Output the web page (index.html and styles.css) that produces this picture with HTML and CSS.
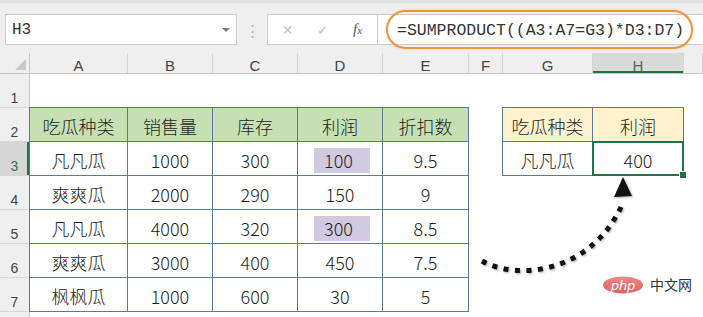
FILE: index.html
```html
<!DOCTYPE html>
<html lang="zh">
<head>
    <meta charset="UTF-8">
    <title>SUMPRODUCT 条件求和</title>
    <link rel="stylesheet" href="styles.css">
</head>
<body>
    <div class="window">
        <!-- name box + formula bar -->
        <div class="topbar">
            <div class="namebox">
                <span class="ref">H3</span>
                <span class="caret"></span>
            </div>
            <div class="grip">⋮</div>
            <div class="fxbox">
                <span class="btn-x">✕</span>
                <span class="btn-ok">✓</span>
                <span class="fx">f<small>x</small></span>
            </div>
            <div class="formula">
                <span class="callout">=SUMPRODUCT((A3:A7=G3)*D3:D7)</span>
            </div>
        </div>

        <!-- column letters -->
        <div class="colheads">
            <div class="corner"><span class="tri"></span></div>
            <div class="col">A</div>
            <div class="col">B</div>
            <div class="col">C</div>
            <div class="col">D</div>
            <div class="col">E</div>
            <div class="col">F</div>
            <div class="col">G</div>
            <div class="col active">H</div>
            <div class="col"></div>
        </div>

        <div class="sheet">
            <div class="rowheads">
                <div class="rh">1</div>
                <div class="rh">2</div>
                <div class="rh active">3</div>
                <div class="rh">4</div>
                <div class="rh">5</div>
                <div class="rh">6</div>
                <div class="rh">7</div>
                <div class="rh"></div>
            </div>

            <div class="cells">
                <div class="tbl sales">
                    <div class="cell hd">吃瓜种类</div>
                    <div class="cell hd">销售量</div>
                    <div class="cell hd">库存</div>
                    <div class="cell hd">利润</div>
                    <div class="cell hd">折扣数</div>

                    <div class="cell">凡凡瓜</div>
                    <div class="cell">1000</div>
                    <div class="cell">300</div>
                    <div class="cell mark"><span class="hl">100</span></div>
                    <div class="cell">9.5</div>

                    <div class="cell">爽爽瓜</div>
                    <div class="cell">2000</div>
                    <div class="cell">290</div>
                    <div class="cell">150</div>
                    <div class="cell">9</div>

                    <div class="cell">凡凡瓜</div>
                    <div class="cell">4000</div>
                    <div class="cell">320</div>
                    <div class="cell mark"><span class="hl">300</span></div>
                    <div class="cell">8.5</div>

                    <div class="cell">爽爽瓜</div>
                    <div class="cell">3000</div>
                    <div class="cell">400</div>
                    <div class="cell">450</div>
                    <div class="cell">7.5</div>

                    <div class="cell">枫枫瓜</div>
                    <div class="cell">1000</div>
                    <div class="cell">600</div>
                    <div class="cell">30</div>
                    <div class="cell">5</div>
                </div>

                <div class="tbl lookup">
                    <div class="cell hd">吃瓜种类</div>
                    <div class="cell hd">利润</div>
                    <div class="cell">凡凡瓜</div>
                    <div class="cell sel">400</div>
                </div>
            </div>
        </div>

        <!-- dotted arrow + watermark drawn over the sheet -->
        <svg class="overlay" width="703" height="317" viewBox="0 0 703 317">
            <path class="dots" d="M482 261 C515 280 590 275 622 205"/>
            <polygon class="head" points="623,177 614,197 632,196"/>
            <defs>
                <linearGradient id="php" x1="0" y1="0" x2="0" y2="1">
                    <stop offset="0" stop-color="#ee8a88"/>
                    <stop offset="1" stop-color="#dd5f5f"/>
                </linearGradient>
            </defs>
            <ellipse cx="623" cy="285" rx="20" ry="8.5" fill="url(#php)"/>
            <text class="php" x="623" y="289.5">php</text>
            <text class="cn" x="650" y="290">中文网</text>
        </svg>
    </div>
</body>
</html>
```

FILE: styles.css
```css
* {
    margin: 0;
    padding: 0;
    box-sizing: border-box;
}

body {
    width: 703px;
    height: 317px;
    overflow: hidden;
    background: #fff;
    font-family: "Noto Sans CJK SC", "Noto Sans", sans-serif;
    color: #1e1e1e;
}

.window {
    position: relative;
    width: 703px;
    height: 317px;
    overflow: hidden;
}

/* ---------- formula bar ---------- */
.topbar {
    height: 53px;
    display: flex;
    align-items: flex-start;
    background: #efefef;
    border-top: 3px solid #e2e2e2;
    padding: 11px 0 0 5px;
}

.namebox {
    width: 232px;
    height: 31px;
    display: flex;
    align-items: center;
    background: #fff;
    border: 1px solid #cbcbcb;
    padding: 0 6px 0 6px;
}

.ref {
    flex: 1;
    font-family: "Liberation Mono", monospace;
    font-size: 16px;
    color: #333;
}

.caret {
    width: 0;
    height: 0;
    border-left: 4px solid transparent;
    border-right: 4px solid transparent;
    border-top: 4px solid #7a7a7a;
}

.grip {
    width: 30px;
    height: 31px;
    display: flex;
    align-items: center;
    justify-content: center;
    color: #b5b5b5;
    font-size: 15px;
}

.fxbox {
    width: 111px;
    height: 31px;
    display: flex;
    align-items: center;
    background: #fff;
    border: 1px solid #cbcbcb;
    padding-left: 2px;
}

.fxbox span {
    width: 35px;
    text-align: center;
}

.btn-x,
.btn-ok {
    color: #c4c4c4;
    font-family: "DejaVu Sans", sans-serif;
    font-size: 14px;
}

.fx {
    font-family: "Liberation Serif", serif;
    font-style: italic;
    font-size: 15px;
    color: #555;
}

.fx small {
    font-size: 11px;
}

.formula {
    flex: 1;
    height: 31px;
    display: flex;
    align-items: center;
    background: #fff;
    border: 1px solid #cbcbcb;
    border-right: none;
    margin-left: -1px;
    padding-left: 8px;
}

.callout {
    flex-shrink: 0;
    height: 39px;
    display: flex;
    align-items: center;
    border: 2px solid #ea9540;
    border-radius: 20px;
    box-shadow: 0 0 2px rgba(234, 149, 64, 0.6);
    padding: 1px 7px 0 9px;
    font-family: "Liberation Mono", monospace;
    font-size: 16.5px;
    color: #333;
    white-space: nowrap;
}

/* ---------- headers ---------- */
.colheads {
    height: 21px;
    display: grid;
    grid-template-columns: 30px 98px 85px 85px 85px 86px 34px 90px 91px 1fr;
    background: #efefef;
    border-bottom: 1px solid #c6c6c6;
}

.col,
.corner {
    border-right: 1px solid #d4d4d4;
    display: flex;
    align-items: flex-end;
    justify-content: center;
    font-family: "Liberation Sans", sans-serif;
    font-size: 15px;
    line-height: 15px;
    color: #444;
}

.corner {
    position: relative;
    border-right-color: #c6c6c6;
}

.tri {
    position: absolute;
    right: 3px;
    bottom: 3px;
    width: 0;
    height: 0;
    border-left: 11px solid transparent;
    border-bottom: 11px solid #c9c9c9;
}

.col.active {
    background: #d9d9d9;
    color: #4d6b5b;
    box-shadow: inset 0 -2px 0 #217346;
}

.sheet {
    display: flex;
}

.rowheads {
    width: 30px;
    flex-shrink: 0;
    background: #efefef;
    border-right: 1px solid #c6c6c6;
}

.rh {
    height: 34px;
    display: flex;
    align-items: flex-end;
    justify-content: center;
    padding-bottom: 1px;
    border-bottom: 1px solid #d6d6d6;
    font-family: "Liberation Sans", sans-serif;
    font-size: 14px;
    line-height: 16px;
    color: #444;
}

.rh.active {
    background: #d6d6d6;
    color: #3f6a52;
    box-shadow: inset -2px 0 0 #217346;
}

/* ---------- data ---------- */
.cells {
    flex: 1;
    display: flex;
    align-items: flex-start;
    gap: 33px;
    padding-top: 33px;
}

.tbl {
    display: grid;
    grid-auto-rows: 33px;
    gap: 1px;
    padding: 1px;
    background: #5a7a9b;
}

.sales {
    grid-template-columns: 97px 84px 84px 84px 85px;
    margin-left: -1px;
}

.lookup {
    grid-template-columns: 89px 90px;
}

.cell {
    display: flex;
    align-items: center;
    justify-content: center;
    padding-top: 3px;
    background: #fff;
    font-size: 18px;
    font-weight: 300;
    line-height: 22px;
    white-space: nowrap;
}

.sales .hd {
    background: #c6e0b4;
}

.lookup .hd {
    background: #fff2cc;
}

.cell.mark {
    justify-content: flex-start;
    padding-left: 16px;
}

.hl {
    width: 56px;
    height: 25px;
    display: flex;
    align-items: center;
    padding-left: 10px;
    background: #d1c9df;
}

.cell.sel {
    position: relative;
}

.cell.sel::before {
    content: "";
    position: absolute;
    inset: -1px;
    border: 2px solid #217346;
}

.cell.sel::after {
    content: "";
    position: absolute;
    right: -4px;
    bottom: -4px;
    width: 6px;
    height: 6px;
    background: #217346;
    border: 1px solid #fff;
}

/* ---------- overlay ---------- */
.overlay {
    position: absolute;
    left: 0;
    top: 0;
    pointer-events: none;
}

.dots {
    fill: none;
    stroke: #111;
    stroke-width: 5;
    stroke-dasharray: 5 6.5;
    filter: drop-shadow(1px 1px 1px rgba(0, 0, 0, 0.35));
}

.head {
    fill: #111;
    filter: drop-shadow(1px 1px 1px rgba(0, 0, 0, 0.35));
}

.php {
    font-family: "DejaVu Sans", sans-serif;
    font-style: italic;
    font-size: 13px;
    fill: #fff;
    text-anchor: middle;
}

.cn {
    font-family: "Noto Sans CJK SC", sans-serif;
    font-size: 14px;
    fill: #333;
}
```
